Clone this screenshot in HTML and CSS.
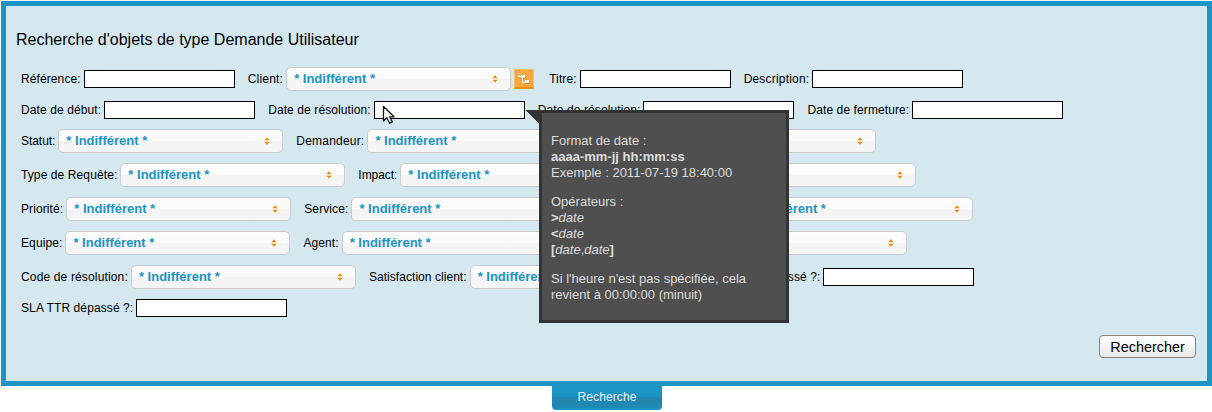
FILE: index.html
```html
<!DOCTYPE html>
<html lang="fr">
<head>
<meta charset="utf-8">
<title>Recherche</title>
<link rel="stylesheet" href="styles.css">
</head>
<body>
<svg class="defs" width="0" height="0"><symbol id="ud" viewBox="0 0 7 9"><path d="M3.500 0 6.500 3.500H.5zM3.500 9 .5 5.500h6z"/></symbol></svg>
<main class="panel">
  <h1 class="title">Recherche d'objets de type Demande Utilisateur</h1>
  <form class="criteria">
    <div class="row">
      <label class="field">Référence:<input class="text" type="text"></label>
      <div class="group">
        <label class="field loose">Client:<span class="select"><b>* Indifférent *</b><svg class="updown"><use href="#ud"/></svg></span></label>
        <span class="tree"><svg viewBox="0 0 20 20" width="20" height="20"><path d="M7 7.500h4.500V10H7zM11 12.500h4.500V15H11z" fill="#d9820d"/><path d="M7 6h4v3H7zM11 11h4v3h-4z" fill="#fff"/><path d="M4.500 4v3.500H7M8.500 9v4.500H11" fill="none" stroke="#fff"/></svg></span>
      </div>
      <label class="field">Titre:<input class="text" type="text"></label>
      <label class="field loose">Description:<input class="text" type="text"></label>
    </div>
    <div class="row">
      <label class="field">Date de début:<input class="text" type="text"></label>
      <label class="field">Date de résolution:<input class="text" type="text"></label>
      <label class="field">Date de résolution:<input class="text" type="text"></label>
      <label class="field">Date de fermeture:<input class="text" type="text"></label>
    </div>
    <div class="row">
      <label class="field tight">Statut:<span class="select"><b>* Indifférent *</b><svg class="updown"><use href="#ud"/></svg></span></label>
      <label class="field loose">Demandeur:<span class="select"><b>* Indifférent *</b><svg class="updown"><use href="#ud"/></svg></span></label>
      <label class="field">Origine:<span class="select"><b>* Indifférent *</b><svg class="updown"><use href="#ud"/></svg></span></label>
    </div>
    <div class="row">
      <label class="field">Type de Requête:<span class="select"><b>* Indifférent *</b><svg class="updown"><use href="#ud"/></svg></span></label>
      <label class="field tight">Impact:<span class="select"><b>* Indifférent *</b><svg class="updown"><use href="#ud"/></svg></span></label>
      <label class="field">Urgence:<span class="select"><b>* Indifférent *</b><svg class="updown"><use href="#ud"/></svg></span></label>
    </div>
    <div class="row">
      <label class="field">Priorité:<span class="select"><b>* Indifférent *</b><svg class="updown"><use href="#ud"/></svg></span></label>
      <label class="field">Service:<span class="select"><b>* Indifférent *</b><svg class="updown"><use href="#ud"/></svg></span></label>
      <label class="field loose">Elément de configuration :<span class="select wide"><b>* Indifférent *</b><svg class="updown"><use href="#ud"/></svg></span></label>
    </div>
    <div class="row">
      <label class="field">Equipe:<span class="select"><b>* Indifférent *</b><svg class="updown"><use href="#ud"/></svg></span></label>
      <label class="field">Agent:<span class="select"><b>* Indifférent *</b><svg class="updown"><use href="#ud"/></svg></span></label>
      <label class="field loose">Date d'échéance :<span class="select"><b>* Indifférent *</b><svg class="updown"><use href="#ud"/></svg></span></label>
    </div>
    <div class="row">
      <label class="field plain">Code de résolution:<span class="select"><b>* Indifférent *</b><svg class="updown"><use href="#ud"/></svg></span></label>
      <label class="field near">Satisfaction client:<span class="select"><b>* Indifférent *</b><svg class="updown"><use href="#ud"/></svg></span></label>
      <label class="field">SLA TTO dépassé ?:<input class="text" type="text"></label>
    </div>
    <div class="row">
      <label class="field">SLA TTR dépassé ?:<input class="text" type="text"></label>
    </div>
    <div class="actions"><button class="submit" type="button">Rechercher</button></div>
  </form>
  <aside class="tooltip">
    <p>Format de date :<br><strong>aaaa-mm-jj hh:mm:ss</strong><br>Exemple : 2011-07-19 18:40:00</p>
    <p>Opérateurs :<br><strong>&gt;</strong><em>date</em><br><strong>&lt;</strong><em>date</em><br><strong>[</strong><em>date</em>,<em>date</em><strong>]</strong></p>
    <p>Si l'heure n'est pas spécifiée, cela revient à 00:00:00 (minuit)</p>
  </aside>
  <svg class="cursor" width="16" height="22" viewBox="0 0 16 22"><path d="M1.500 1.500V16l3.300-3.200 2.800 5.400 2.700-1.300-2.700-5.100h4.400z" fill="#fff" stroke="#111" stroke-width="1.300" stroke-linejoin="round"/></svg>
</main>
<div class="tabs"><span class="tab">Recherche</span></div>
</body>
</html>
```
FILE: styles.css
```css
* { box-sizing: border-box; }
html, body { margin: 0; height: 412px; overflow: hidden; background: #fff; }
body { font-family: "Liberation Sans", Arial, sans-serif; font-size: 12px; color: #000; }
.defs { display: block; position: absolute; }

.panel {
  position: relative;
  margin: 1px 0 0 1px;
  height: 385px;
  background: #d5e7ef;
  border: 5px solid #1c94c4;
}
.title { margin: 0; padding: 25px 0 0 10px; height: 56px; font-size: 16px; line-height: 18px; font-weight: 400; }
.criteria { padding: 0 0 0 15px; }
.row { display: flex; align-items: center; gap: 13px; padding: 5px 0; min-height: 28px; }
.group { display: flex; align-items: center; gap: 3px; margin-right: 2px; }
.field { display: flex; align-items: center; gap: 3px; white-space: nowrap; line-height: 14px; letter-spacing: .1px; }
.tight { letter-spacing: -.05px; }
.plain { letter-spacing: .15px; }
.near { letter-spacing: .05px; }
.loose { letter-spacing: .2px; }
.text { width: 151px; height: 18px; margin: 0; padding: 0 2px; border: 1px solid #000; background: #fff; }
.select {
  display: flex; align-items: center; justify-content: space-between;
  width: 225px; height: 24px; padding: 0 12px 0 7px;
  border: 1px solid #ccc; border-radius: 5px;
  background: linear-gradient(#fdfdfd 0, #fafafa 50%, #f4f4f4 50%, #f6f6f6 100%);
  color: #1c94c4; font-size: 13px; letter-spacing: 0;
}
.select b { font-weight: 700; }
.wide { width: 236px; }
.updown { width: 6px; height: 8px; fill: #ee8a0a; }
.tree {
  width: 20px; height: 20px; display: block;
  background: #f9a73d; border: 1px solid #fbbd6c; border-bottom: 2px solid #e8930f;
  border-radius: 1px; overflow: hidden;
}
.tree svg { display: block; margin: -1px; }
.actions { display: flex; justify-content: flex-end; padding: 13px 11px 0 0; }
.submit {
  width: 97px; height: 23px; padding: 0;
  font: 14.4px "Liberation Sans", Arial, sans-serif; color: #000;
  background: linear-gradient(#fff, #e9e9e9); border: 1px solid #8f8478; border-radius: 4px;
}
.tooltip {
  position: absolute; left: 533px; top: 104px; width: 250px; height: 213px;
  padding: 20px 8px 0 9px;
  background: #4f4f4f; border: 3px solid #333;
  color: #ddd; font-size: 13px; line-height: 16px;
}
.tooltip::before {
  content: ""; position: absolute; left: -16px; top: -3px;
  width: 14px; height: 15px;
  background: linear-gradient(to top right, transparent 50%, #333 50%);
}
.tooltip p { margin: 0 0 13px; }
.cursor { position: absolute; left: 376px; top: 99px; }
.tabs { display: flex; padding-left: 552px; }
.tab {
  width: 110px; height: 24px; text-align: center; line-height: 23px; color: #e8f4fa; font-size: 12px; letter-spacing: .1px;
  border-radius: 0 0 4px 4px;
  background: linear-gradient(#1c94c4 0, #1c94c4 11px, #2284ad 11px, #1f8ab6 22px, #1c94c4 22px);
}
```
